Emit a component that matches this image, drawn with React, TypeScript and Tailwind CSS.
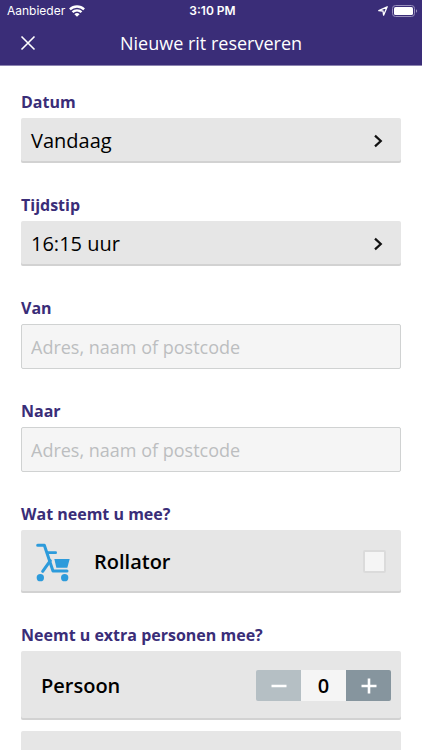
import React, { useState } from 'react'
import type { ReactNode } from 'react'

const labelClass = 'block text-base leading-6 font-bold text-[#3a2d78]'
const cardClass = 'w-full rounded-xs bg-[#e6e6e6] shadow-[inset_0_-2px_0_#d2d2d2]'

function StatusBar() {
  return (
    <div className="grid grid-cols-3 items-center h-[21px] pl-[7px] pr-1 font-['Inter',sans-serif] text-xs">
      <div className="flex items-center gap-1">
        <span>Aanbieder</span>
        <svg viewBox="0 0 16 12" className="w-4 h-3" fill="none" stroke="currentColor" strokeWidth="2.4">
          <path d="M0.9 4.4a10.2 10.2 0 0 1 14.2 0" />
          <path d="M3.5 7.2a6.4 6.4 0 0 1 9 0" />
          <path d="M8 11.8 5.4 9.2a3.7 3.7 0 0 1 5.2 0Z" fill="currentColor" stroke="none" />
        </svg>
      </div>
      <span className="text-center font-semibold">3:10 PM</span>
      <div className="flex items-center justify-end gap-1">
        <svg viewBox="0 0 10 10" className="w-[10px] h-[10px]" fill="none" stroke="currentColor" strokeWidth="1.3" strokeLinejoin="round">
          <path d="M9.2 0.8 5.6 9.2 5 5 0.8 4.6Z" />
        </svg>
        <svg viewBox="0 0 26 12" className="w-[26px] h-3">
          <rect x="0.5" y="0.5" width="22" height="11" rx="3" fill="none" stroke="#9990bd" />
          <rect x="2" y="2" width="19" height="8" rx="1.6" fill="#fff" />
          <path d="M24 4.2a2 2 0 0 1 0 3.6Z" fill="#9990bd" />
        </svg>
      </div>
    </div>
  )
}

function RollatorIcon() {
  return (
    <svg viewBox="18 18 108 120" className="w-9 h-10" fill="none" stroke="#2d9bdb">
      <path d="M23 28h20l26 77h42" strokeWidth="9" strokeLinecap="round" strokeLinejoin="round" />
      <path d="M52 50h25" strokeWidth="8" strokeLinecap="round" />
      <path d="M61 74 38 106" strokeWidth="9" strokeLinecap="round" />
      <path d="M73 69h46l-7 26H79Z" fill="#2d9bdb" stroke="none" />
      <circle cx="31" cy="125" r="11" fill="#2d9bdb" stroke="none" />
      <circle cx="104" cy="125" r="11" fill="#2d9bdb" stroke="none" />
    </svg>
  )
}

function Field({ label, htmlFor, children }: { label: string; htmlFor: string; children: ReactNode }) {
  return (
    <div className="flex flex-col gap-1">
      <label htmlFor={htmlFor} className={labelClass}>{label}</label>
      {children}
    </div>
  )
}

function PickerButton({ id, value }: { id: string; value: string }) {
  return (
    <button id={id} type="button" className={`${cardClass} flex items-center justify-between h-[45px] pl-[10px] pr-[18px] text-xl text-black`}>
      <span>{value}</span>
      <svg viewBox="0 0 10 14" className="w-[10px] h-[14px]" fill="none" stroke="#111" strokeWidth="2.2">
        <path d="M2 1.6 7.8 7 2 12.4" />
      </svg>
    </button>
  )
}

function AddressInput({ id }: { id: string }) {
  return (
    <input
      id={id}
      type="text"
      placeholder="Adres, naam of postcode"
      className="w-full h-[45px] rounded-xs border border-[#d0d2d2] bg-[#f5f5f5] px-[9px] text-lg text-black placeholder:text-[#bcbec0] outline-none"
    />
  )
}

export default function App() {
  const [rollator, setRollator] = useState(false)
  const [persons, setPersons] = useState(0)

  return (
    <div className="flex flex-col h-screen overflow-hidden bg-white font-['Open_Sans',sans-serif]">
      <header className="shrink-0 border-b border-[#8c84b0] bg-[#3a2d78] text-white">
        <StatusBar />
        <div className="grid grid-cols-[36px_1fr_36px] items-center h-11">
          <button type="button" aria-label="Sluiten" className="flex justify-end">
            <svg viewBox="0 0 16 16" className="w-4 h-4" fill="none" stroke="currentColor" strokeWidth="1.6">
              <path d="M1.5 1.5l13 13M14.5 1.5l-13 13" />
            </svg>
          </button>
          <h1 className="text-center text-lg">Nieuwe rit reserveren</h1>
        </div>
      </header>

      {/* Form */}
      <main className="flex flex-1 flex-col gap-[30px] overflow-y-auto px-[21px] pt-6 [scrollbar-width:none]">
        <Field label="Datum" htmlFor="datum">
          <PickerButton id="datum" value="Vandaag" />
        </Field>
        <Field label="Tijdstip" htmlFor="tijdstip">
          <PickerButton id="tijdstip" value="16:15 uur" />
        </Field>
        <Field label="Van" htmlFor="van">
          <AddressInput id="van" />
        </Field>
        <Field label="Naar" htmlFor="naar">
          <AddressInput id="naar" />
        </Field>

        {/* Luggage */}
        <section className="flex flex-col gap-1">
          <h2 className={labelClass}>Wat neemt u mee?</h2>
          <label className={`${cardClass} flex items-center h-[63px] px-[15px]`}>
            <RollatorIcon />
            <span className="ml-[22px] flex-1 text-xl font-semibold text-black">Rollator</span>
            <input
              type="checkbox"
              checked={rollator}
              onChange={(e) => setRollator(e.target.checked)}
              className="appearance-none w-[23px] h-[23px] rounded-xs border-2 border-[#dbdbdb] bg-[#f5f5f5] checked:bg-[#2d9bdb]"
            />
          </label>
        </section>

        {/* Extra passengers */}
        <section className="flex flex-col gap-1">
          <h2 className={labelClass}>Neemt u extra personen mee?</h2>
          <div className={`${cardClass} flex shrink-0 items-center justify-between h-[69px] pl-5 pr-[10px]`}>
            <span className="text-xl font-semibold text-black">Persoon</span>
            <div className="flex h-[31px] overflow-hidden rounded-xs text-white">
              <button
                type="button"
                aria-label="Minder personen"
                onClick={() => setPersons(Math.max(0, persons - 1))}
                className="flex w-[45px] items-center justify-center bg-[#b5bfc4]"
              >
                <svg viewBox="0 0 16 16" className="w-4 h-4" stroke="currentColor" strokeWidth="2.4">
                  <path d="M0.5 8h15" />
                </svg>
              </button>
              <output className="flex w-[45px] items-center justify-center bg-[#f5f5f5] text-xl font-semibold text-black">{persons}</output>
              <button
                type="button"
                aria-label="Meer personen"
                onClick={() => setPersons(persons + 1)}
                className="flex w-[45px] items-center justify-center bg-[#86959e]"
              >
                <svg viewBox="0 0 16 16" className="w-4 h-4" stroke="currentColor" strokeWidth="2.6">
                  <path d="M0.5 8h15M8 0.5v15" />
                </svg>
              </button>
            </div>
          </div>
          <div className={`${cardClass} mt-[7px] h-[69px] shrink-0`} />
        </section>
      </main>
    </div>
  )
}
